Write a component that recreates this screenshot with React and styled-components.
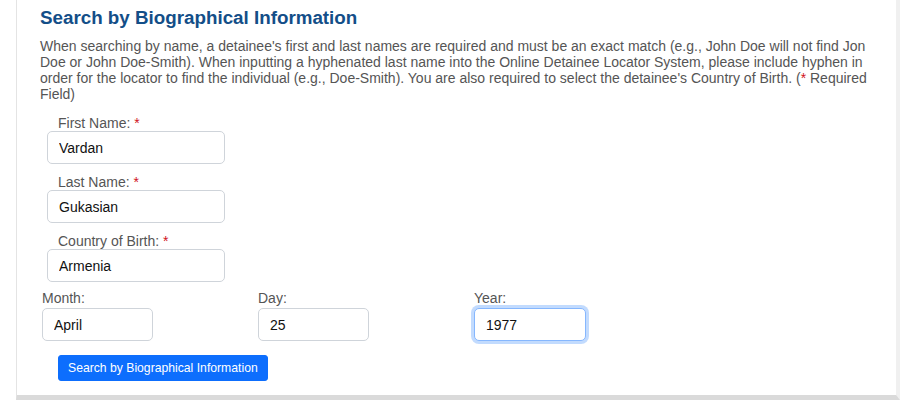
import React from 'react'
import styled, { createGlobalStyle } from 'styled-components'

const GlobalStyle = createGlobalStyle`
  html, body {
    margin: 0;
    padding: 0;
    background: #ffffff;
    font-family: "Liberation Sans", Arial, Helvetica, sans-serif;
  }
`

const Page = styled.div`
  width: 900px;
  height: 400px;
  overflow: hidden;
  display: flex;
`

const Panel = styled.section`
  box-sizing: border-box;
  margin-left: 16px;
  width: 884px;
  height: 400px;
  background: #fff;
  border-left: 1px solid #e4e4e4;
  border-right: 4px solid #f0f0f0;
  border-bottom: 5px solid #dadada;
  padding: 7px 14px 0 23px;
`

const Heading = styled.h2`
  margin: 0;
  font-size: 18.8px;
  line-height: 22px;
  font-weight: 700;
  color: #134e88;
`

const Intro = styled.p`
  margin: 9px 0 0;
  font-size: 14px;
  line-height: 16px;
  color: #555;
`

const Req = styled.span`
  color: #d0131c;
`

const Stack = styled.div`
  margin: 13px 0 0 7px;
  display: flex;
  flex-direction: column;
  gap: 10px;
`

const Field = styled.div`
  display: flex;
  flex-direction: column;
  gap: ${p => p.$gap || 0}px;
`

const Label = styled.label`
  font-size: 14px;
  line-height: 16px;
  color: #555;
  padding-left: ${p => p.$indent || 0}px;
`

const Input = styled.input`
  box-sizing: border-box;
  width: ${p => p.$w}px;
  height: 33px;
  padding: 0 11px;
  font-family: inherit;
  font-size: 14px;
  color: #111;
  background: #fff;
  border: 1px solid ${p => (p.$focus ? '#86b7fe' : '#cfd4da')};
  border-radius: 5px;
  outline: none;
  box-shadow: ${p => (p.$focus ? '0 0 0 3px rgba(13, 110, 253, 0.25)' : 'none')};
`

const DateRow = styled.div`
  margin: 8px 0 0 2px;
  display: grid;
  grid-template-columns: 216px 216px 216px;
`

const Button = styled.button`
  margin: 14px 0 0 18px;
  height: 26px;
  padding: 0 9px;
  background: #0d6efd;
  color: #fff;
  border: 1px solid #0d6efd;
  border-radius: 3px;
  font-family: inherit;
  font-size: 12.2px;
  cursor: pointer;
`

const names = [
  { label: 'First Name:', value: 'Vardan' },
  { label: 'Last Name:', value: 'Gukasian' },
  { label: 'Country of Birth:', value: 'Armenia' },
]

const dates = [
  { label: 'Month:', value: 'April' },
  { label: 'Day:', value: '25' },
  { label: 'Year:', value: '1977', focus: true },
]

export default function App() {
  return (
    <Page>
      <GlobalStyle />
      <Panel>
        <Heading>Search by Biographical Information</Heading>
        <Intro>
          When searching by name, a detainee's first and last names are required and must be an exact match
          (e.g., John Doe will not find Jon Doe or John Doe-Smith). When inputting a hyphenated last name into
          the Online Detainee Locator System, please include hyphen in order for the locator to find the
          individual (e.g., Doe-Smith). You are also required to select the detainee's Country of Birth.
          (<Req>*</Req> Required Field)
        </Intro>
        <Stack>
          {names.map(n => (
            <Field key={n.label}>
              <Label $indent={11}>
                {n.label} <Req>*</Req>
              </Label>
              <Input $w={178} defaultValue={n.value} readOnly />
            </Field>
          ))}
        </Stack>
        <DateRow>
          {dates.map(d => (
            <Field key={d.label} $gap={2}>
              <Label>{d.label}</Label>
              <Input $w={d.focus ? 112 : 111} $focus={d.focus} defaultValue={d.value} readOnly />
            </Field>
          ))}
        </DateRow>
        <Button type="button">Search by Biographical Information</Button>
      </Panel>
    </Page>
  )
}
